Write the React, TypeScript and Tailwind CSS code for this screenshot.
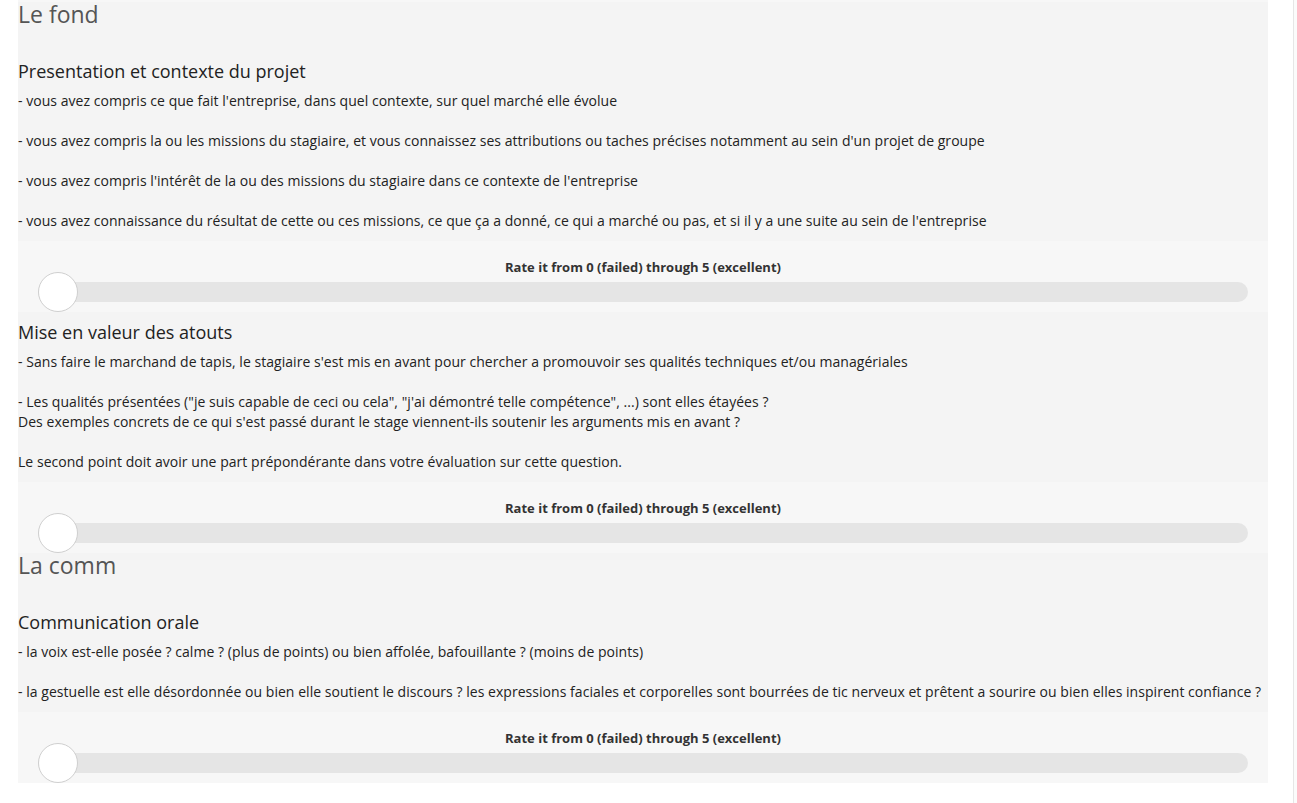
import React from "react";

type Question = {
    title: string;
    paragraphs: string[][];
};

type Section = {
    title: string;
    questions: Question[];
};

const sections: Section[] = [
    {
        title: "Le fond",
        questions: [
            {
                title: "Presentation et contexte du projet",
                paragraphs: [
                    ["- vous avez compris ce que fait l'entreprise, dans quel contexte, sur quel marché elle évolue"],
                    ["- vous avez compris la ou les missions du stagiaire, et vous connaissez ses attributions ou taches précises notamment au sein d'un projet de groupe"],
                    ["- vous avez compris l'intérêt de la ou des missions du stagiaire dans ce contexte de l'entreprise"],
                    ["- vous avez connaissance du résultat de cette ou ces missions, ce que ça a donné, ce qui a marché ou pas, et si il y a une suite au sein de l'entreprise"],
                ],
            },
            {
                title: "Mise en valeur des atouts",
                paragraphs: [
                    ["- Sans faire le marchand de tapis, le stagiaire s'est mis en avant pour chercher a promouvoir ses qualités techniques et/ou managériales"],
                    [
                        "- Les qualités présentées (\"je suis capable de ceci ou cela\", \"j'ai démontré telle compétence\", ...) sont elles étayées ?",
                        "Des exemples concrets de ce qui s'est passé durant le stage viennent-ils soutenir les arguments mis en avant ?",
                    ],
                    ["Le second point doit avoir une part prépondérante dans votre évaluation sur cette question."],
                ],
            },
        ],
    },
    {
        title: "La comm",
        questions: [
            {
                title: "Communication orale",
                paragraphs: [
                    ["- la voix est-elle posée ? calme ? (plus de points) ou bien affolée, bafouillante ? (moins de points)"],
                    ["- la gestuelle est elle désordonnée ou bien elle soutient le discours ? les expressions faciales et corporelles sont bourrées de tic nerveux et prêtent a sourire ou bien elles inspirent confiance ?"],
                ],
            },
        ],
    },
];

const RateSlider = () => (
    <div className="h-[71px] bg-[#f7f7f7] pt-[17px]">
        <p className="text-center text-[13px] leading-[18px] font-bold text-[#333]">
            Rate it from 0 (failed) through 5 (excellent)
        </p>
        <div className="relative mx-[20px] -mt-[4px] flex h-[40px] items-center">
            <div className="h-[20px] w-full rounded-full bg-[#e5e5e5]" />
            <div className="absolute left-0 top-0 h-[40px] w-[40px] rounded-full border border-[#cfcfcf] bg-white" />
        </div>
    </div>
);

const QuestionBlock = ({ question }: { question: Question }) => (
    <div>
        <div className="pt-[10px] pb-[10px]">
            <h4 className="mb-[10px] text-[18px] leading-[20px] text-[#222]">{question.title}</h4>
            <div className="text-[14px] leading-[20px] tracking-[0.04px] text-[#222]">
                {question.paragraphs.map((lines, i) => (
                    <p key={i} className={i > 0 ? "mt-[20px]" : ""}>
                        {lines.map((line, j) => (
                            <span key={j} className="block">{line}</span>
                        ))}
                    </p>
                ))}
            </div>
        </div>
        <RateSlider />
    </div>
);

export default function App() {
    return (
        <div className="flex min-h-screen bg-white font-['Open_Sans',sans-serif]">
            <div className="w-[1293px] shrink-0 pl-[18px]">
                <div className="w-[1250px] bg-[#f4f4f4]">
                    {/* bottom edge of the previous rating, scrolled off the top */}
                    <div className="h-[2px] bg-[#f7f7f7]" />
                    {sections.map((section) => (
                        <div key={section.title}>
                            <h3 className="mb-[25px] text-[23px] leading-[24px] text-[#555]">{section.title}</h3>
                            {section.questions.map((q) => (
                                <QuestionBlock key={q.title} question={q} />
                            ))}
                        </div>
                    ))}
                </div>
            </div>
            <div className="w-px shrink-0 bg-[#e6e6e6]" />
            <div className="flex-1 bg-[#fbfbfb]" />
        </div>
    );
}
